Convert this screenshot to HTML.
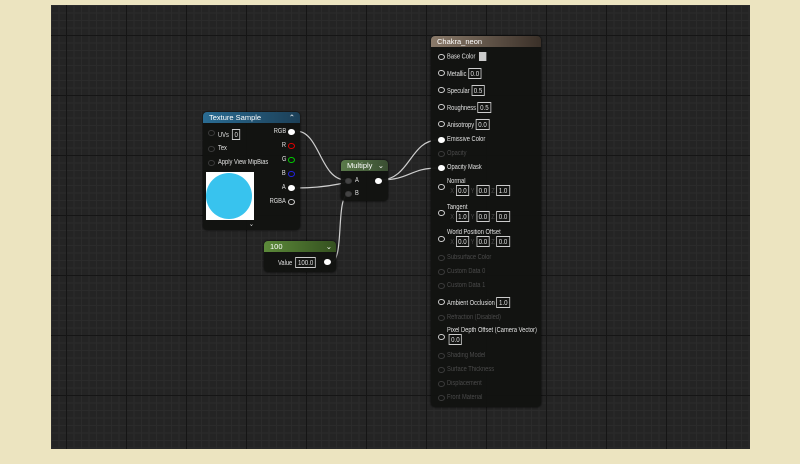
<!DOCTYPE html>
<html><head><style>
*{margin:0;padding:0;box-sizing:border-box}
body{width:800px;height:464px;background:#ece4c0;position:relative;overflow:hidden;font-family:"Liberation Sans",sans-serif;font-size:7px;color:#e0e0e0}
#grid{position:absolute;left:51px;top:5px;width:699px;height:444px;background-color:#242424;
background-image:linear-gradient(90deg,#151515 1px,transparent 1px),linear-gradient(#151515 1px,transparent 1px),linear-gradient(90deg,#2b2b2b 1px,transparent 1px),linear-gradient(#2b2b2b 1px,transparent 1px);
background-size:60px 60px,60px 60px,7.5px 7.5px,7.5px 7.5px;background-position:15px 0,0 30px,0 0,0 0}
.node{position:absolute;background:rgba(18,19,17,.96);border-radius:4px;box-shadow:0 0 2px #000}
.hd{height:11px;border-radius:4px 4px 0 0;padding-left:6px;line-height:11px;font-size:7.5px;color:#fff}
.t{position:absolute;white-space:nowrap;transform:scaleX(.82);transform-origin:left top}
.r{transform-origin:right top}
.pin{position:absolute;width:7px;height:6px;border:1.3px solid #ccc;border-radius:3px 50% 50% 3px}
.pf{background:#fff;border-color:#fff}
.box{display:inline-block;border:1px solid #ccc;padding:0 2px;line-height:9px;font-size:7.5px;margin-left:2px}
.dim{color:#4a4a4a}
.dp{border-color:#3a3a3a}
</style></head><body>
<div id="grid"></div>
<svg width="800" height="464" style="position:absolute;left:0;top:0">
<g fill="none" stroke="#cfcfcf" stroke-width="1.2">
<path d="M296 131 C320 131,320 180,346 180"/>
<path d="M296 188 C330 188,360 180,346 180"/>
<path d="M331 262 C345 262,335 194,349 194"/>
<path d="M380 180 C410 180,410 140,438 140"/>
<path d="M380 180 C410 180,410 168,438 168"/>
</g></svg>

<div class="node" style="left:203px;top:112px;width:97px;height:118px">
<div class="hd" style="background:linear-gradient(90deg,#2a6c93,#1c3f57)">Texture Sample<span style="float:right;margin-right:5px">⌃</span></div>
<div class="pin dp" style="left:5px;top:18px"></div><div class="t" style="left:15px;top:17px">UVs <span class="box">0</span></div>
<div class="pin dp" style="left:5px;top:34px"></div><div class="t" style="left:15px;top:33px">Tex</div>
<div class="pin dp" style="left:5px;top:48px"></div><div class="t" style="left:15px;top:47px">Apply View MipBias</div>
<div class="t r" style="right:14px;top:16px">RGB</div><div class="pin pf" style="right:5px;top:17px"></div>
<div class="t r" style="right:14px;top:30px">R</div><div class="pin" style="right:5px;top:31px;border-color:#d00"></div>
<div class="t r" style="right:14px;top:44px">G</div><div class="pin" style="right:5px;top:45px;border-color:#0c0"></div>
<div class="t r" style="right:14px;top:58px">B</div><div class="pin" style="right:5px;top:59px;border-color:#22d"></div>
<div class="t r" style="right:14px;top:72px">A</div><div class="pin pf" style="right:5px;top:73px"></div>
<div class="t r" style="right:14px;top:86px">RGBA</div><div class="pin" style="right:5px;top:87px"></div>
<div style="position:absolute;left:3px;top:60px;width:48px;height:48px;background:#fff"><div style="margin:1px 0 0 0;width:46px;height:46px;border-radius:50%;background:#38c3ee"></div></div>
<div class="t" style="left:46px;top:108px">⌄</div>
</div>

<div class="node" style="left:341px;top:160px;width:47px;height:41px">
<div class="hd" style="background:linear-gradient(90deg,#5a7a4a,#3a4e32)">Multiply<span style="float:right;margin-right:4px">⌄</span></div>
<div class="pin dp" style="left:4px;top:18px;background:#444"></div><div class="t" style="left:14px;top:17px">A</div>
<div class="pin dp" style="left:4px;top:31px;background:#444"></div><div class="t" style="left:14px;top:30px">B</div>
<div class="pin pf" style="right:6px;top:18px"></div>
</div>

<div class="node" style="left:264px;top:241px;width:72px;height:31px">
<div class="hd" style="background:linear-gradient(90deg,#5c8a3a,#34501f)">100<span style="float:right;margin-right:4px">⌄</span></div>
<div class="t" style="left:14px;top:16px">Value <span class="box">100.0</span></div>
<div class="pin pf" style="right:5px;top:18px"></div>
</div>

<div class="node" style="left:431px;top:36px;width:110px;height:371px">
<div class="hd" style="background:linear-gradient(90deg,#8a7a6a,#3a3028)">Chakra_neon</div>
<div class="pin" style="left:7px;top:18px"></div><div class="t" style="left:16px;top:16px">Base Color <span style="display:inline-block;width:9px;height:9px;background:#ccc;vertical-align:middle;margin-left:2px"></span></div>
<div class="pin" style="left:7px;top:34px"></div><div class="t" style="left:16px;top:32px">Metallic<span class="box">0.0</span></div>
<div class="pin" style="left:7px;top:51px"></div><div class="t" style="left:16px;top:49px">Specular<span class="box">0.5</span></div>
<div class="pin" style="left:7px;top:68px"></div><div class="t" style="left:16px;top:66px">Roughness<span class="box">0.5</span></div>
<div class="pin" style="left:7px;top:85px"></div><div class="t" style="left:16px;top:83px">Anisotropy<span class="box">0.0</span></div>
<div class="pin pf" style="left:7px;top:101px"></div><div class="t" style="left:16px;top:100px">Emissive Color</div>
<div class="pin dp" style="left:7px;top:115px"></div><div class="t dim" style="left:16px;top:114px">Opacity</div>
<div class="pin pf" style="left:7px;top:129px"></div><div class="t" style="left:16px;top:128px">Opacity Mask</div>
<div class="pin" style="left:7px;top:148px"></div><div class="t" style="left:16px;top:142px">Normal<br><span class="dim">&nbsp;&nbsp;X</span><span class="box">0.0</span> <span class="dim">Y</span><span class="box">0.0</span> <span class="dim">Z</span><span class="box">1.0</span></div>
<div class="pin" style="left:7px;top:174px"></div><div class="t" style="left:16px;top:168px">Tangent<br><span class="dim">&nbsp;&nbsp;X</span><span class="box">1.0</span> <span class="dim">Y</span><span class="box">0.0</span> <span class="dim">Z</span><span class="box">0.0</span></div>
<div class="pin" style="left:7px;top:200px"></div><div class="t" style="left:16px;top:193px">World Position Offset<br><span class="dim">&nbsp;&nbsp;X</span><span class="box">0.0</span> <span class="dim">Y</span><span class="box">0.0</span> <span class="dim">Z</span><span class="box">0.0</span></div>
<div class="pin dp" style="left:7px;top:219px"></div><div class="t dim" style="left:16px;top:218px">Subsurface Color</div>
<div class="pin dp" style="left:7px;top:233px"></div><div class="t dim" style="left:16px;top:232px">Custom Data 0</div>
<div class="pin dp" style="left:7px;top:247px"></div><div class="t dim" style="left:16px;top:246px">Custom Data 1</div>
<div class="pin" style="left:7px;top:263px"></div><div class="t" style="left:16px;top:261px">Ambient Occlusion<span class="box">1.0</span></div>
<div class="pin dp" style="left:7px;top:279px"></div><div class="t dim" style="left:16px;top:278px">Refraction (Disabled)</div>
<div class="pin" style="left:7px;top:298px"></div><div class="t" style="left:16px;top:291px">Pixel Depth Offset (Camera Vector)<br><span class="box">0.0</span></div>
<div class="pin dp" style="left:7px;top:317px"></div><div class="t dim" style="left:16px;top:316px">Shading Model</div>
<div class="pin dp" style="left:7px;top:331px"></div><div class="t dim" style="left:16px;top:330px">Surface Thickness</div>
<div class="pin dp" style="left:7px;top:345px"></div><div class="t dim" style="left:16px;top:344px">Displacement</div>
<div class="pin dp" style="left:7px;top:359px"></div><div class="t dim" style="left:16px;top:358px">Front Material</div>
</div>
</body></html>
